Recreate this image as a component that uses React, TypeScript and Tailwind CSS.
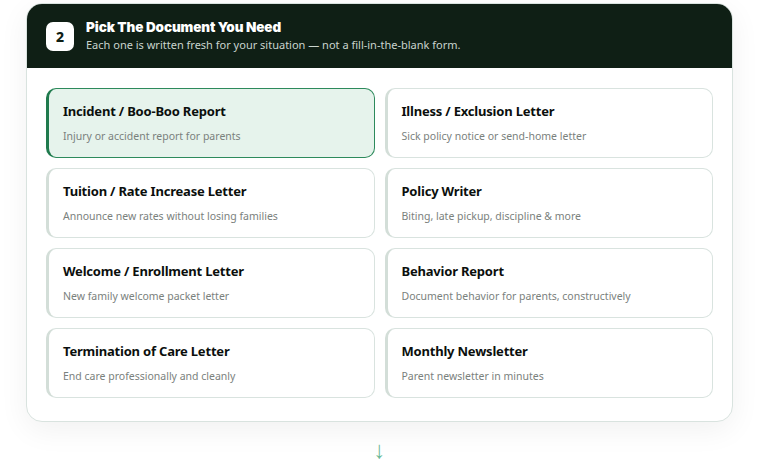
import React from 'react';

interface DocOption {
  id: string;
  title: string;
  desc: string;
}

const docs: DocOption[] = [
  { id: 'incident', title: 'Incident / Boo-Boo Report', desc: 'Injury or accident report for parents' },
  { id: 'illness', title: 'Illness / Exclusion Letter', desc: 'Sick policy notice or send-home letter' },
  { id: 'tuition', title: 'Tuition / Rate Increase Letter', desc: 'Announce new rates without losing families' },
  { id: 'policy', title: 'Policy Writer', desc: 'Biting, late pickup, discipline & more' },
  { id: 'welcome', title: 'Welcome / Enrollment Letter', desc: 'New family welcome packet letter' },
  { id: 'behavior', title: 'Behavior Report', desc: 'Document behavior for parents, constructively' },
  { id: 'termination', title: 'Termination of Care Letter', desc: 'End care professionally and cleanly' },
  { id: 'newsletter', title: 'Monthly Newsletter', desc: 'Parent newsletter in minutes' },
];

const App: React.FC = () => {
  const selected = 'incident';

  return (
    <div className="min-h-[469px] w-[778px] bg-white font-['Noto_Sans',sans-serif]">
      <div className="pl-[26px] pt-[3px]">
        {/* Step card */}
        <div className="w-[707px] overflow-hidden rounded-[16px] border border-[#d9e3df] bg-white shadow-[0_8px_30px_rgba(0,0,0,0.06)]">
          {/* Header */}
          <div className="flex h-[64px] items-center gap-3 bg-[#0f1f15] pl-[19px]">
            <div className="flex h-[29px] w-[28px] items-center justify-center rounded-[7px] bg-white text-[14px] font-extrabold text-[#0f1f15]">
              2
            </div>
            <div className="-mt-[1px] flex flex-col">
              <h2 className="text-[13.5px] leading-[18px] font-black tracking-[-0.1px] text-white font-['Inter',sans-serif]">
                Pick The Document You Need
              </h2>
              <p className="mt-[1px] text-[11px] leading-[16px] text-[#c9d4ce]">
                Each one is written fresh for your situation — not a fill-in-the-blank form.
              </p>
            </div>
          </div>

          {/* Options grid */}
          <div className="grid grid-cols-2 gap-x-[10px] gap-y-[10px] px-[19px] pt-[20px] pb-[23px]">
            {docs.map((d) => {
              const isSel = d.id === selected;
              return (
                <button
                  key={d.id}
                  className={`flex h-[70px] flex-col items-start rounded-[10px] border border-l-[3px] pl-[14px] pt-[13px] text-left ${
                    isSel
                      ? 'border-[#2d8a5c] border-l-[#1f7a4d] bg-[#e6f3ec]'
                      : 'border-[#d9e3df] border-l-[#d3ded8] bg-white'
                  }`}
                >
                  <span className="text-[13px] leading-[18px] font-bold tracking-[-0.2px] text-[#0b0f0d]">{d.title}</span>
                  <span className="mt-[9px] text-[10.5px] leading-[14px] text-[#7a817d]">{d.desc}</span>
                </button>
              );
            })}
          </div>
        </div>

        {/* Arrow */}
        <div className="flex w-[707px] justify-center pt-[14px] text-[24px] leading-[26px] text-[#6dba98]">
          ↓
        </div>
      </div>
    </div>
  );
};

export default App;
